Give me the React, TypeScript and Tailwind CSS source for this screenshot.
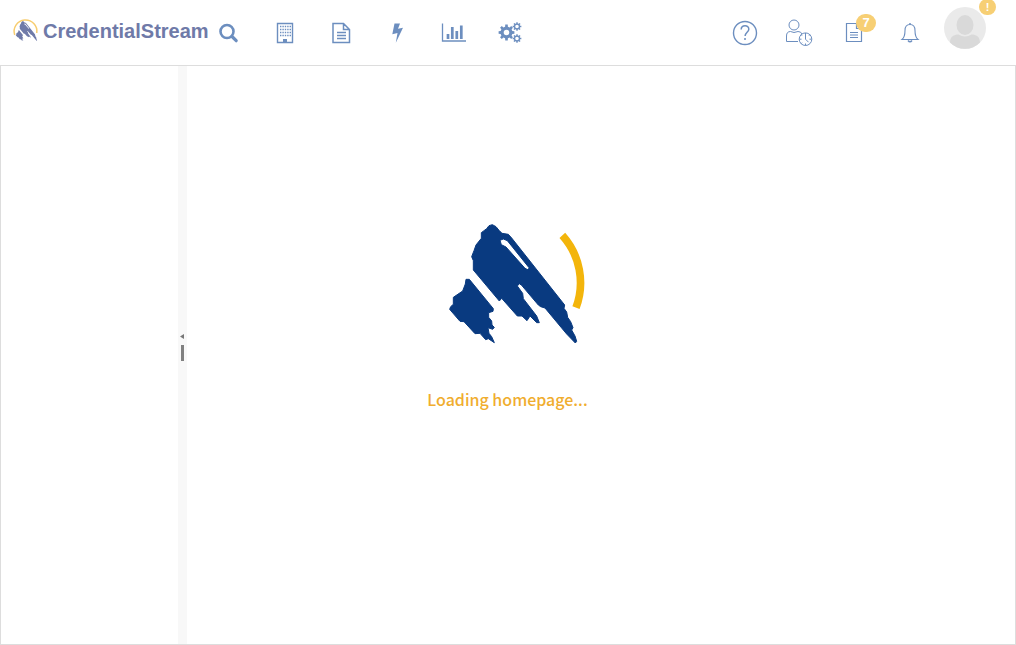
import React from "react";

function gearPath(cx: number, cy: number, outer: number, inner: number, hole: number, teeth: number) {
  const step = (Math.PI * 2) / teeth;
  const pts: string[] = [];
  for (let i = 0; i < teeth; i++) {
    const a = i * step;
    [
      [inner, -0.3],
      [outer, -0.2],
      [outer, 0.2],
      [inner, 0.3],
    ].forEach(([r, f]) => {
      pts.push(`${(cx + r * Math.cos(a + f * step)).toFixed(2)} ${(cy + r * Math.sin(a + f * step)).toFixed(2)}`);
    });
  }
  return `M${pts.join("L")}Z M${cx - hole} ${cy}a${hole} ${hole} 0 1 0 ${hole * 2} 0a${hole} ${hole} 0 1 0 ${-hole * 2} 0Z`;
}

const peak =
  "M207 47L217 44 228 50 237 61 246 70 265 73 275 84 434 285 432 295 440 306 443 322 452 335 459 353 455 360 465 378 470 394 466 399 440 372 375 294 362 290 355 285 305 226 298 221 292 228 308 250 310 266 350 318 358 338 350 338 330 318 321 332 306 318 292 318 245 265 238 273 160 180 160 152 155 140 162 122 168 105 184 85 184 68 200 56Z M240 91L250 87 262 92 327 173 325 180 315 175 258 111 244 104Z";
const foothill =
  "M138 208H148L220 296 219 304 206 308 206 322 215 333 216 345 223 352 218 358 204 353 207 370 215 380 223 398 205 386 197 389 180 370 165 371 132 335 120 334 89 298 92 290 100 283 100 262 128 243 136 222Z";

function Peaks() {
  return (
    <>
      <path fillRule="evenodd" d={peak} />
      <path d={foothill} />
    </>
  );
}

function Icon({ children }: { children: React.ReactNode }) {
  return (
    <svg width="28" height="28" viewBox="0 0 28 28" fill="none" stroke="currentColor" aria-hidden="true" className="block">
      {children}
    </svg>
  );
}

function IconButton({ label, children }: { label: string; children: React.ReactNode }) {
  return (
    <button type="button" aria-label={label} className="relative block text-[#6c8ebf]">
      {children}
    </button>
  );
}

export default function App() {
  return (
    <div className="flex min-h-screen flex-col bg-white font-['Liberation_Sans',Arial,sans-serif]">
      <header className="flex h-[65px] items-center justify-between pr-[30px] pb-0.5 pl-3">
        <div className="flex items-center">
          <a href="#home" className="mb-0.5 flex items-center gap-1 text-[#6f7aa8]">
            <svg width="27" height="28" viewBox="0 0 27 28" aria-hidden="true">
              <path d="M2.7 18A11.4 11.4 0 1 1 24.8 16" fill="none" stroke="#f7cd70" strokeWidth="1.5" />
              <g fill="currentColor" transform="translate(-1.2 1.6) scale(.056)"><Peaks /></g>
            </svg>
            <span className="text-[20px] leading-7 font-bold">CredentialStream</span>
          </a>
          <nav aria-label="Main" className="ml-1.5 flex items-center gap-7">
            <IconButton label="Search">
              <Icon>
                <circle cx="12" cy="13.5" r="6.5" strokeWidth="2.6" />
                <path d="M17 18.5l4.200 4.200" strokeWidth="3.200" strokeLinecap="round" />
              </Icon>
            </IconButton>
            <IconButton label="Facilities">
              <Icon>
                <path d="M6.500 5.500h15v19h-15z" strokeWidth="1.400" />
                <path d="M9 8.500h11M9 11.500h11M9 14.500h11M9 17.500h11" strokeWidth="1.500" strokeDasharray="1.400 1" />
                <path d="M12 21h4v4h-4z" fill="currentColor" stroke="none" />
              </Icon>
            </IconButton>
            <IconButton label="Documents">
              <Icon>
                <path d="M6 5.500h10.500l6 6v13H6zM16.500 5.500v6h6M10 14.500h9M10 17.500h9M10 20.500h9" strokeWidth="1.500" />
              </Icon>
            </IconButton>
            <IconButton label="Actions">
              <Icon>
                <path d="M11.500 5.500H17L15 10.800 20 9.800 12.800 24.800 14.500 15 9.300 16.200Z" fill="currentColor" stroke="none" />
              </Icon>
            </IconButton>
            <IconButton label="Reports">
              <Icon>
                <path d="M3.500 5.500v17.500H27" strokeWidth="1.300" />
                <path d="M9 21v-5M13.300 21V9M17.800 21v-8M22.300 21V7.500" strokeWidth="2.700" />
              </Icon>
            </IconButton>
            <IconButton label="Settings">
              <Icon>
                <g fill="currentColor" stroke="none" fillRule="evenodd">
                  <path d={gearPath(11.5, 14.5, 8, 6, 2.8, 8)} />
                  <path d={gearPath(22, 8.5, 4.4, 3.2, 1.8, 8)} />
                  <path d={gearPath(22, 20.5, 4.4, 3.2, 1.8, 8)} />
                </g>
              </Icon>
            </IconButton>
          </nav>
        </div>
        <div className="flex items-center gap-5">
          <div className="flex items-center gap-[27px]">
            <IconButton label="Help">
              <Icon>
                <circle cx="14" cy="15" r="11.500" strokeWidth="1.400" />
                <path d="M10.200 11.500c0-5 7.800-4.800 7.600-.3-.1 2.900-3.700 3.200-3.700 6.800M14 20v2" strokeWidth="1.500" />
              </Icon>
            </IconButton>
            <IconButton label="Recent providers">
              <Icon>
                <circle cx="8" cy="7" r="5" />
                <path d="M12 23.500H.500v-5.500q0-4.500 4-4.500l3.500 1 4-1q3 0 4 2.500" />
                <circle cx="19.500" cy="21.200" r="6.300" />
                <path d="M19.500 17v4.200l3 3M19.500 15v2M19.500 25.500v2M13.500 21.200h2M23.500 21.200h2M15 16.700l1 1M24 16.700l-1 1M15 25.700l1-1" />
              </Icon>
            </IconButton>
            <IconButton label="Tasks, 7 open">
              <Icon>
                <path d="M5.500 5.500h10l5 5v13h-15zM15.500 5.500v5h5" strokeWidth="1.200" />
                <path d="M9 14.500h8M9 17h8M9 19.500h8" strokeWidth="1.200" />
              </Icon>
              <span className="absolute -top-1 left-[15px] flex h-[18px] w-5 items-center justify-center rounded-full bg-[#f7cf74] text-[13px] font-bold text-white">7</span>
            </IconButton>
            <IconButton label="Notifications">
              <Icon>
                <path d="M6 21.500c2.500-2 3-4 3-9 0-4 2-6 5-6s5 2 5 6c0 5 .5 7 3 9z" strokeWidth="1.100" />
                <path d="M14 5v1.500M12 22.500q2 2.500 4 0" strokeWidth="1.500" />
              </Icon>
            </IconButton>
          </div>
          <button type="button" aria-label="Account, needs attention" className="relative mb-2 block">
            <svg width="42" height="42" viewBox="0 0 42 42" aria-hidden="true" className="block">
              <circle cx="21" cy="21" r="21" fill="#eaeaea" />
              <ellipse cx="21" cy="18" rx="8.500" ry="10" fill="#d9d9d9" />
              <path d="M6 35.500c0-6 4-8 8.500-8q6.500 4 13 0c4.500 0 8.500 2 8.500 8a21 21 0 0 1-30 0z" fill="#d9d9d9" />
            </svg>
            <span className="absolute -top-2 -right-2.5 flex h-4 w-[17px] items-center justify-center rounded-full bg-[#f7cf74] text-[11px] leading-3 font-bold text-white">!</span>
          </button>
        </div>
      </header>
      <div className="flex grow border border-[#dddddd]">
        <aside aria-label="Side panel" className="w-[177px] shrink-0" />
        <button type="button" aria-label="Collapse side panel" className="flex w-[9px] shrink-0 flex-col items-center justify-center gap-1.5 bg-[#f8f8f8] pr-px pb-4">
          <svg width="4" height="5" viewBox="0 0 4 5" aria-hidden="true"><path d="M4 0v5L0 2.500z" fill="#777777" /></svg>
          <span className="h-4 w-[3px] bg-[#808080]" />
        </button>
        <main className="flex grow flex-col items-center pt-[144px] pr-[187px]">
          <svg width="176" height="150" viewBox="0 0 528 450" aria-hidden="true" className="shrink-0">
            <g fill="#093a80" stroke="#093a80" strokeWidth="3" strokeLinejoin="round"><Peaks /></g>
            <path d="M427 76A213 213 0 0 1 468 293" fill="none" stroke="#f3b50b" strokeWidth="23" />
          </svg>
          <p role="status" className="mt-[27px] font-['Noto_Sans_CJK_SC',sans-serif] text-[16px] leading-6 font-medium text-[#f0ad2e]">
            Loading homepage...
          </p>
        </main>
      </div>
    </div>
  );
}
